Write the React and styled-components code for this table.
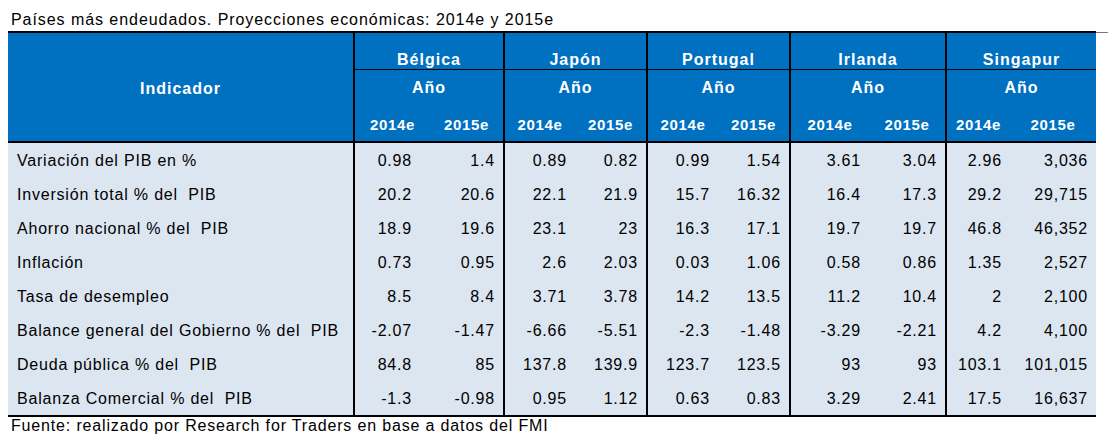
import React from "react";
import styled, { createGlobalStyle } from "styled-components";

const GlobalStyle = createGlobalStyle`
  html, body {
    margin: 0;
    padding: 0;
    background: #ffffff;
  }
  body {
    font-family: "Liberation Sans", Arial, sans-serif;
    color: #000000;
  }
`;

const HEAD_BLUE = "#0070c0";
const BODY_BG = "#dce6f1";

const Page = styled.div`
  padding-left: 8px;
  width: 1105px;
`;

const Title = styled.div`
  height: 29px;
  margin-bottom: 2px;
  padding: 11px 0 0 3px;
  box-sizing: border-box;
  font-size: 16px;
  line-height: 18px;
  letter-spacing: 0.94px;
  white-space: pre;
`;

const TopRule = styled.div`
  display: flex;
  align-items: center;
  height: 2px;
`;

const BlackRule = styled.div`
  flex: 0 0 1088px;
  height: 2px;
  background: #000000;
`;

const TailRule = styled.div`
  flex: 0 0 12px;
  height: 1px;
  background: #7a7a7a;
`;

const Grid = styled.div`
  display: grid;
  width: 1088px;
  grid-template-columns: 345px 77px 73px 72px 71px 72px 71px 80px 76px 65px 86px;
  grid-template-rows: 37px 35px 38px repeat(8, 34px);
  border-bottom: 2px solid #000000;
`;

const HeadBase = styled.div`
  box-sizing: border-box;
  background: ${HEAD_BLUE};
  color: #ffffff;
  font-weight: bold;
  display: flex;
  justify-content: center;
  white-space: pre;
`;

const IndicatorHead = styled(HeadBase)`
  grid-row: 1 / span 3;
  align-items: center;
  padding-top: 3px;
  font-size: 16px;
  line-height: 18px;
  letter-spacing: 1px;
  border-bottom: 2px solid #000000;
`;

const CountryHead = styled(HeadBase)`
  grid-column: span 2;
  align-items: flex-end;
  padding-bottom: 0px;
  font-size: 16px;
  line-height: 18px;
  letter-spacing: 1px;
  border-left: 2px solid #000000;
  border-bottom: 1px solid #000000;
`;

const YearLabelHead = styled(HeadBase)`
  grid-column: span 2;
  align-items: center;
  font-size: 16px;
  line-height: 18px;
  letter-spacing: 1px;
  border-left: 2px solid #000000;
`;

const YearHead = styled(HeadBase)`
  align-items: flex-end;
  padding-bottom: 8px;
  font-size: 15px;
  line-height: 17px;
  letter-spacing: 0.7px;
  border-bottom: 2px solid #000000;
  border-left: ${(p) => (p.$groupStart ? "2px solid #000000" : "none")};
`;

const BodyBase = styled.div`
  box-sizing: border-box;
  background: ${BODY_BG};
  display: flex;
  align-items: center;
  padding-top: 2px;
  font-size: 16px;
  line-height: 18px;
  letter-spacing: 0.8px;
  white-space: pre;
`;

const LabelCell = styled(BodyBase)`
  justify-content: flex-start;
  padding-left: 9px;
`;

const ValueCell = styled(BodyBase)`
  justify-content: flex-end;
  padding-right: ${(p) => p.$pad}px;
  border-left: ${(p) => (p.$groupStart ? "2px solid #000000" : "none")};
`;

const Footer = styled.div`
  padding-left: 3px;
  font-size: 16px;
  line-height: 18px;
  letter-spacing: 0.84px;
  white-space: pre;
`;

const countries = ["Bélgica", "Japón", "Portugal", "Irlanda", "Singapur"];

// right padding per sub-column (value columns)
const pads = [18, 8, 8, 8, 8, 8, 8, 8, 8, 8];

const rows = [
  ["Variación del PIB en %", ["0.98", "1.4", "0.89", "0.82", "0.99", "1.54", "3.61", "3.04", "2.96", "3,036"]],
  ["Inversión total % del  PIB", ["20.2", "20.6", "22.1", "21.9", "15.7", "16.32", "16.4", "17.3", "29.2", "29,715"]],
  ["Ahorro nacional % del  PIB", ["18.9", "19.6", "23.1", "23", "16.3", "17.1", "19.7", "19.7", "46.8", "46,352"]],
  ["Inflación", ["0.73", "0.95", "2.6", "2.03", "0.03", "1.06", "0.58", "0.86", "1.35", "2,527"]],
  ["Tasa de desempleo", ["8.5", "8.4", "3.71", "3.78", "14.2", "13.5", "11.2", "10.4", "2", "2,100"]],
  ["Balance general del Gobierno % del  PIB", ["-2.07", "-1.47", "-6.66", "-5.51", "-2.3", "-1.48", "-3.29", "-2.21", "4.2", "4,100"]],
  ["Deuda pública % del  PIB", ["84.8", "85", "137.8", "139.9", "123.7", "123.5", "93", "93", "103.1", "101,015"]],
  ["Balanza Comercial % del  PIB", ["-1.3", "-0.98", "0.95", "1.12", "0.63", "0.83", "3.29", "2.41", "17.5", "16,637"]],
];

export default function App() {
  return (
    <>
      <GlobalStyle />
      <Page>
        <Title>Países más endeudados. Proyecciones económicas: 2014e y 2015e</Title>
        <TopRule>
          <BlackRule />
          <TailRule />
        </TopRule>
        <Grid>
          <IndicatorHead>Indicador</IndicatorHead>
          {countries.map((c) => (
            <CountryHead key={c}>{c}</CountryHead>
          ))}
          {countries.map((c) => (
            <YearLabelHead key={c + "-a"}>Año</YearLabelHead>
          ))}
          {countries.map((c) => (
            <React.Fragment key={c + "-y"}>
              <YearHead $groupStart>2014e</YearHead>
              <YearHead>2015e</YearHead>
            </React.Fragment>
          ))}
          {rows.map(([label, values]) => (
            <React.Fragment key={label}>
              <LabelCell>{label}</LabelCell>
              {values.map((v, i) => (
                <ValueCell key={i} $groupStart={i % 2 === 0} $pad={pads[i]}>
                  {v}
                </ValueCell>
              ))}
            </React.Fragment>
          ))}
        </Grid>
        <Footer>Fuente: realizado por Research for Traders en base a datos del FMI</Footer>
      </Page>
    </>
  );
}
